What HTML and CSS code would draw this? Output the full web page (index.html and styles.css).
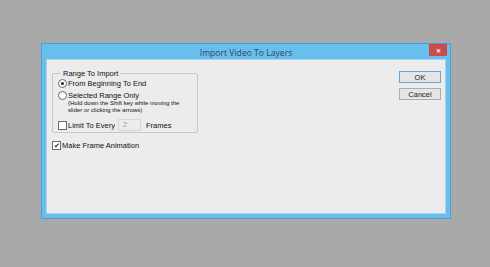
FILE: index.html
```html
<!DOCTYPE html>
<html lang="en">
<head>
    <meta charset="UTF-8">
    <title>Import Video To Layers</title>
    <link rel="stylesheet" href="styles.css">
</head>
<body>
    <div class="dialog">
        <div class="title-bar">
            <span class="title">Import Video To Layers</span>
            <span class="close-btn">&#x2715;</span>
        </div>
        <div class="client">
            <div class="left-col">
                <fieldset class="range-group">
                    <legend>Range To Import</legend>
                    <label class="option">
                        <span class="radio checked"></span>From Beginning To End
                    </label>
                    <label class="option second">
                        <span class="radio"></span>Selected Range Only
                    </label>
                    <div class="note">(Hold down the Shift key while moving the<br>slider or clicking the arrows)</div>
                    <div class="limit-row">
                        <span class="check"></span>
                        <span class="limit-label">Limit To Every</span>
                        <span class="num-field">2</span>
                        <span>Frames</span>
                    </div>
                </fieldset>
                <label class="option anim">
                    <span class="check checked">&#x2714;</span>Make Frame Animation
                </label>
            </div>
            <div class="right-col">
                <button class="btn default">OK</button>
                <button class="btn">Cancel</button>
            </div>
        </div>
    </div>
</body>
</html>
```

FILE: styles.css
```css
body {
    margin: 0;
    padding: 43px 0 0 41px;
    background: #a9a9a9;
    font-family: 'Liberation Sans', Arial, sans-serif;
    font-size: 7.5px;
    color: #111;
    height: 267px;
    box-sizing: border-box;
    overflow: hidden;
}

.dialog {
    width: 410px;
    height: 176px;
    box-sizing: border-box;
    border: 1px solid #4c9fd6;
    background: #68bfee;
    display: flex;
    flex-direction: column;
}

.title-bar {
    height: 15px;
    display: flex;
    align-items: center;
    justify-content: center;
    position: relative;
}

.title {
    font-family: 'Open Sans', 'Noto Sans', sans-serif;
    font-size: 8.6px;
    color: #34465a;
    margin-top: 2px;
}

.close-btn {
    position: absolute;
    right: 3px;
    top: 0;
    width: 18px;
    height: 12px;
    background: #c94c4c;
    color: #fff;
    font-size: 6px;
    font-weight: bold;
    display: flex;
    align-items: center;
    justify-content: center;
}

.client {
    margin: 0 4px;
    height: 155px;
    background: #ececec;
    border: 1px solid #a8d3ec;
    box-sizing: border-box;
    display: flex;
    justify-content: space-between;
    padding: 9px 4px 0 5px;
}

.range-group {
    width: 146px;
    height: 64px;
    box-sizing: border-box;
    margin: 0;
    padding: 0 0 0 5px;
    border: 1px solid #c7c7c7;
    border-radius: 2px;
}

.range-group legend {
    padding: 0 2px;
    margin-left: 3px;
}

.option {
    display: flex;
    align-items: center;
    height: 11px;
    white-space: nowrap;
}

.option.second {
    margin-top: 1px;
}

.radio {
    width: 7px;
    height: 7px;
    border: 1px solid #6a6a6a;
    border-radius: 50%;
    background: #fff;
    margin-right: 1px;
    position: relative;
}

.radio.checked::after {
    content: "";
    position: absolute;
    left: 2px;
    top: 2px;
    width: 3px;
    height: 3px;
    border-radius: 50%;
    background: #222;
}

.note {
    font-size: 6px;
    line-height: 7px;
    margin-left: 10px;
    margin-top: -1px;
}

.limit-row {
    display: flex;
    align-items: center;
    margin-top: 5px;
    white-space: nowrap;
}

.check {
    width: 7px;
    height: 7px;
    border: 1px solid #6a6a6a;
    background: #fff;
    margin-right: 1px;
    font-size: 7px;
    line-height: 7px;
    text-align: center;
    color: #222;
}

.limit-label {
    width: 50px;
}

.num-field {
    width: 23px;
    height: 12px;
    border: 1px solid #d6d6d6;
    background: #ececec;
    color: #999;
    padding-left: 4px;
    box-sizing: border-box;
    line-height: 10px;
    margin-right: 5px;
}

.option.anim {
    margin-top: 7px;
}

.right-col {
    display: flex;
    flex-direction: column;
    gap: 5px;
    padding-top: 2px;
}

.btn {
    width: 42px;
    height: 12px;
    padding: 0;
    font-family: inherit;
    font-size: 7.5px;
    color: #222;
    background: #e5e5e5;
    border: 1px solid #adadad;
}

.btn.default {
    border-color: #5fa6dc;
}
```
